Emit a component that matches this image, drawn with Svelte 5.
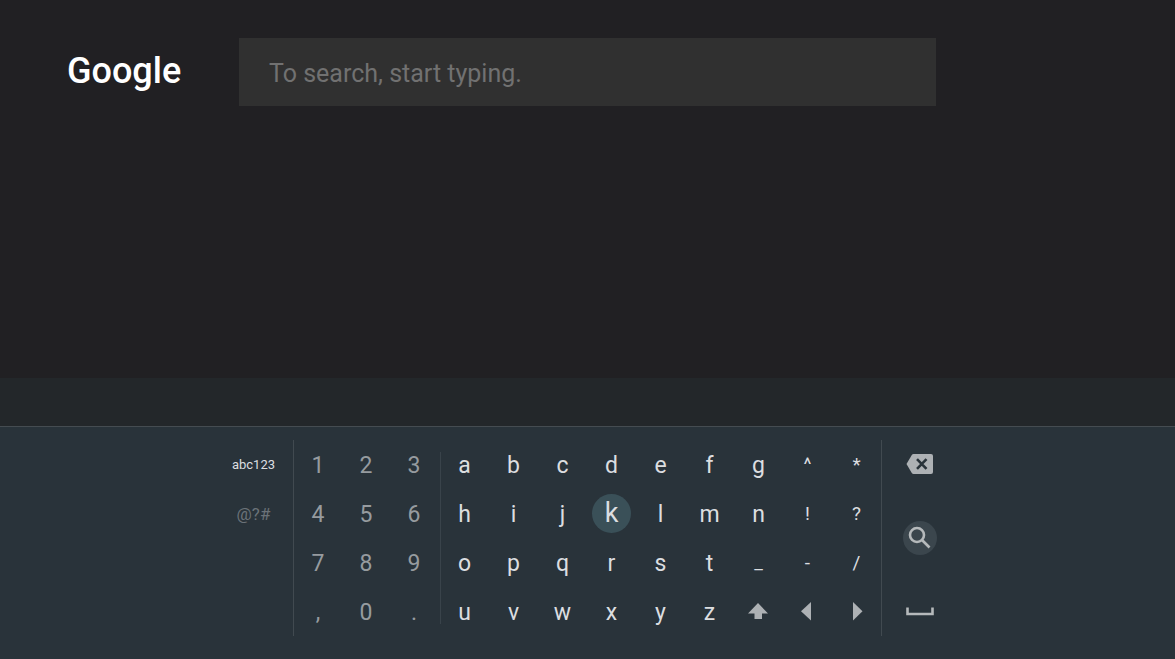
<script>
  const numbers = ['1', '2', '3', '4', '5', '6', '7', '8', '9', ',', '0', '.']

  const letters = [
    'a', 'b', 'c', 'd', 'e', 'f', 'g', '^', '*',
    'h', 'i', 'j', 'k', 'l', 'm', 'n', '!', '?',
    'o', 'p', 'q', 'r', 's', 't', '_', '-', '/',
    'u', 'v', 'w', 'x', 'y', 'z', 'shift', 'left', 'right',
  ]

  const icons = {
    shift: 'M13 4L23 14.500H17V20H9.500V14.500H3Z',
    left: 'M17 3V21.500L7 12.300Z',
    right: 'M10 3V21.500L19.500 12.300Z',
  }

  let query = ''
  let selected = 'k'

  const isSymbol = (key) => '^*!?_-/'.includes(key)

  const press = (key) => {
    selected = key
    query += key
  }

  const erase = () => {
    query = query.slice(0, -1)
  }
</script>

<div class="screen">
  <header>
    <div class="logo">Google</div>
    <input
      type="text"
      aria-label="Search"
      placeholder="To search, start typing."
      bind:value={query}
    />
  </header>

  <div class="suggestions"></div>

  <div class="keyboard">
    <div class="modes">
      <button class="mode">abc123</button>
      <button class="mode symbols">@?#</button>
    </div>

    <div class="numbers">
      {#each numbers as key}
        <button class="key" on:click={() => press(key)}>{key}</button>
      {/each}
    </div>

    <div class="letters">
      {#each letters as key}
        {#if icons[key]}
          <button aria-label={key}>
            <svg width="28" height="26" viewBox="0 0 28 26"><path d={icons[key]} /></svg>
          </button>
        {:else}
          <button
            class="key"
            class:symbol={isSymbol(key)}
            class:selected={selected === key}
            on:click={() => press(key)}><span>{key}</span></button
          >
        {/if}
      {/each}
    </div>

    <div class="actions">
      <button aria-label="backspace" on:click={erase}>
        <svg width="28" height="22" viewBox="0 0 28 22">
          <path
            d="M7.500 0H25Q27 0 27 2V18Q27 20 25 20H7.500Q6.500 20 5.800 19L0.500 10L5.800 1Q6.500 0 7.500 0Z"
          />
          <path class="cross" d="M11 5.200L20.500 14.800M20.500 5.200L11 14.800" />
        </svg>
      </button>
      <button aria-label="search">
        <span class="round">
          <svg width="34" height="34" viewBox="0 0 34 34">
            <circle class="line" cx="14" cy="14" r="7" />
            <path class="line" d="M19 19L26.500 26.500" />
          </svg>
        </span>
      </button>
      <button aria-label="space">
        <svg width="28" height="10" viewBox="0 0 28 10">
          <path class="line" d="M1.500 0.500V7H26.500V0.500" />
        </svg>
      </button>
    </div>
  </div>
</div>

<style>
  :global(body) {
    background: #212023;
  }
  .screen {
    display: flex;
    flex-direction: column;
    min-height: 100vh;
    font-family: Roboto, 'Liberation Sans', sans-serif;
    background: #212023;
  }
  header {
    display: flex;
    flex: 1;
    align-items: flex-start;
    padding: 38px 239px 0 67px;
  }
  .logo {
    flex: 0 0 172px;
    color: #fff;
    font-size: 36px;
    font-weight: 500;
    line-height: 66px;
  }
  input {
    flex: 1;
    min-width: 0;
    height: 68px;
    box-sizing: border-box;
    padding: 2px 30px 0;
    border: 0;
    outline: 0;
    background: #303030;
    color: #ddd;
    font: inherit;
    font-size: 25px;
  }
  input::placeholder {
    color: #717171;
    opacity: 1;
  }
  .suggestions {
    height: 48px;
    background: #23272a;
  }
  .keyboard {
    display: flex;
    justify-content: center;
    padding: 13px 0 23px;
    border-top: 1px solid #454c51;
    background: #29333a;
  }
  button {
    display: flex;
    align-items: center;
    justify-content: center;
    padding: 0;
    border: 0;
    background: none;
    color: #dcdee0;
    font: inherit;
    cursor: pointer;
  }
  .modes {
    display: grid;
    grid-template-rows: repeat(4, 49px);
    width: 79px;
    border-right: 1px solid #414a50;
  }
  .mode {
    font-size: 13px;
  }
  .mode.symbols {
    color: #6b7278;
    font-size: 17px;
  }
  .numbers {
    display: grid;
    grid-template: repeat(4, 49px) / repeat(3, 48px);
    padding-right: 2px;
  }
  .numbers .key {
    color: #969b9f;
  }
  .letters {
    position: relative;
    display: grid;
    grid-template: repeat(4, 49px) / repeat(9, 49px);
  }
  .letters::before {
    content: '';
    position: absolute;
    top: 12px;
    bottom: 12px;
    left: 0;
    border-left: 1px solid #39434a;
  }
  .key {
    padding-top: 2px;
    font-size: 23px;
  }
  .symbol {
    padding-top: 0;
    font-size: 19px;
  }
  .selected {
    padding-top: 0;
  }
  .selected span {
    width: 39px;
    border-radius: 50%;
    background: #3a5058;
    font-size: 27px;
    line-height: 39px;
  }
  .actions {
    display: grid;
    grid-template-rows: 49px 98px 49px;
    width: 75px;
    padding-right: 4px;
    border-left: 1px solid #414a50;
  }
  .round {
    display: flex;
    border-radius: 50%;
    background: #3b464d;
  }
  svg {
    display: block;
    fill: #adb1b4;
  }
  .cross {
    fill: none;
    stroke: #29333a;
    stroke-width: 2.6;
  }
  .line {
    fill: none;
    stroke: #b5b9bb;
    stroke-width: 2.6;
  }
</style>
